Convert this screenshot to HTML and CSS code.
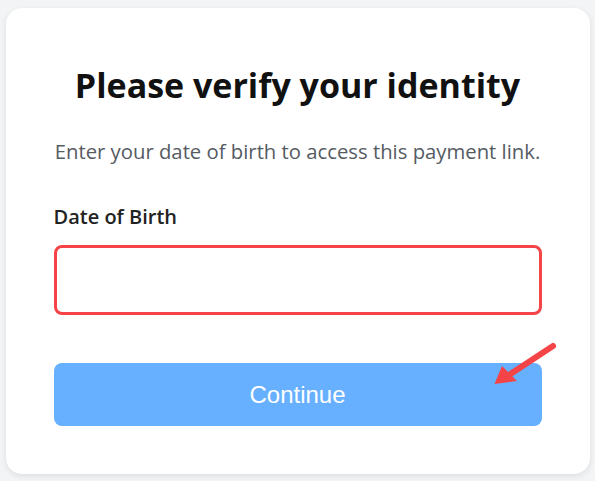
FILE: index.html
```html
<!DOCTYPE html>
<html>
<head>
<meta charset="utf-8">
<link rel="stylesheet" href="styles.css">
</head>
<body>
<div class="card">
  <h1 class="title">Please verify your identity</h1>
  <p class="subtitle">Enter your date of birth to access this payment link.</p>
  <label class="label" for="dob">Date of Birth</label>
  <input class="input" id="dob" type="text">
  <button class="button" type="button">Continue</button>
  <svg class="arrow" width="70" height="50" viewBox="0 0 70 50">
    <path d="M63 5 L19 34" stroke="#f44447" stroke-width="6" stroke-linecap="round" fill="none"/>
    <path d="M4.5 43 L12 25 L19 32 L27 40 Z" fill="#f44447"/>
  </svg>
</div>
</body>
</html>
```
FILE: styles.css
```css
html, body {
  margin: 0;
  padding: 0;
}
body {
  background: #f3f4f6;
  font-family: "Open Sans", "Noto Sans", sans-serif;
  padding: 8px 0 7px;
}
.card {
  position: relative;
  box-sizing: border-box;
  width: 584px;
  height: 466px;
  margin: 0 auto;
  background: #ffffff;
  border-radius: 16px;
  box-shadow: 0 2px 6px rgba(0, 0, 0, 0.09);
  padding: 48px;
  display: flex;
  flex-direction: column;
}
.card > * {
  flex-shrink: 0;
}
.title {
  margin: 7px 0 0;
  text-align: center;
  font-size: 34px;
  line-height: 44px;
  font-weight: 700;
  color: #111111;
}
.subtitle {
  margin: 30px -10px 0;
  text-align: center;
  white-space: nowrap;
  font-size: 20.3px;
  line-height: 28px;
  color: #555b63;
}
.label {
  margin-top: 40px;
  font-size: 20px;
  line-height: 24px;
  font-weight: 600;
  color: #222222;
}
.input {
  margin-top: 16px;
  box-sizing: border-box;
  height: 70px;
  width: 100%;
  border: 3px solid #f44447;
  border-radius: 8px;
  outline: none;
  background: #fff;
}
.button {
  margin-top: 48px;
  height: 63px;
  width: 100%;
  border: none;
  border-radius: 8px;
  background: #66b0ff;
  color: #ffffff;
  font-family: "Liberation Sans", Arial, sans-serif;
  font-size: 24px;
}
.arrow {
  position: absolute;
  left: 484px;
  top: 333px;
}
```
